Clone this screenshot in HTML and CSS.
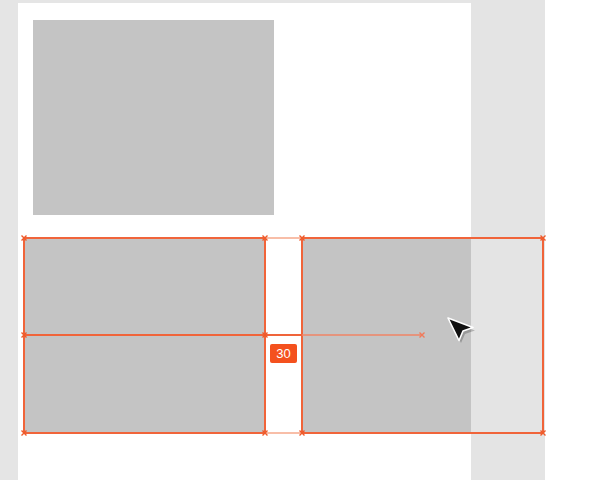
FILE: index.html
```html
<!DOCTYPE html>
<html>
<head>
<meta charset="utf-8">
<link rel="stylesheet" href="styles.css">
</head>
<body>
<div class="stage">
  <div class="gutter"></div>
  <div class="panel">
    <div class="hero"></div>
    <div class="row">
      <div class="box box-left"></div>
      <div class="box box-right"></div>
    </div>
  </div>
  <div class="strip"></div>
  <div class="rest"></div>

  <svg class="guides" width="597" height="480" viewBox="0 0 597 480">
    <g class="faint">
      <line x1="265" y1="238" x2="302" y2="238"/>
      <line x1="265" y1="433" x2="302" y2="433"/>
    </g>
    <g class="line">
      <line x1="24" y1="238" x2="265" y2="238"/>
      <line x1="302" y1="238" x2="543" y2="238"/>
      <line x1="24" y1="433" x2="265" y2="433"/>
      <line x1="302" y1="433" x2="543" y2="433"/>
      <line x1="24" y1="238" x2="24" y2="433"/>
      <line x1="265" y1="238" x2="265" y2="433"/>
      <line x1="302" y1="238" x2="302" y2="433"/>
      <line x1="543" y1="238" x2="543" y2="433"/>
      <line x1="24" y1="335" x2="302" y2="335"/>
    </g>
    <line class="arrow" x1="302" y1="335" x2="422" y2="335"/>
    <g class="marks">
      <path d="M21.5 235.5l5 5M26.5 235.5l-5 5"/>
      <path d="M262.5 235.5l5 5M267.5 235.5l-5 5"/>
      <path d="M299.5 235.5l5 5M304.5 235.5l-5 5"/>
      <path d="M540.5 235.5l5 5M545.5 235.5l-5 5"/>
      <path d="M21.5 332.5l5 5M26.5 332.5l-5 5"/>
      <path d="M262.5 332.5l5 5M267.5 332.5l-5 5"/>
      <path d="M21.5 430.5l5 5M26.5 430.5l-5 5"/>
      <path d="M262.5 430.5l5 5M267.5 430.5l-5 5"/>
      <path d="M299.5 430.5l5 5M304.5 430.5l-5 5"/>
      <path d="M540.5 430.5l5 5M545.5 430.5l-5 5"/>
      <path class="soft" d="M419.5 332.5l5 5M424.5 332.5l-5 5"/>
    </g>
    <g class="cursor">
      <path class="shadow" d="M450 321 L475 330.5 L465 334 L461 343 Z"/>
      <path class="pointer" d="M448 318 L473 327.5 L463 331 L459 340.5 Z"/>
    </g>
  </svg>

  <div class="badge">30</div>
</div>
</body>
</html>
```
FILE: styles.css
```css
html, body {
  margin: 0;
  padding: 0;
  background: #e5e5e5;
  font-family: "Liberation Sans", Arial, sans-serif;
}

.stage {
  position: relative;
  display: flex;
  width: 597px;
  height: 480px;
  overflow: hidden;
}

.gutter {
  width: 18px;
  flex-shrink: 0;
}

.panel {
  width: 453px;
  flex-shrink: 0;
  margin-top: 3px;
  background: #ffffff;
  overflow: hidden;
  padding: 17px 0 0 15px;
  box-sizing: border-box;
}

.hero {
  width: 241px;
  height: 195px;
  background: #c4c4c4;
}

.row {
  display: flex;
  gap: 37px;
  margin-top: 23px;
  margin-left: -8px;
}

.box {
  flex-shrink: 0;
  height: 195px;
  background: #c4c4c4;
}

.box-left {
  width: 240px;
}

.box-right {
  width: 241px;
}

.strip {
  width: 74px;
  flex-shrink: 0;
  background: #e4e4e4;
}

.rest {
  flex: 1;
  background: #ffffff;
}

.guides {
  position: absolute;
  left: 0;
  top: 0;
}

.line line {
  stroke: #f0643a;
  stroke-width: 2;
}

.faint line {
  stroke: #f6a98b;
  stroke-width: 1.6;
}

.arrow {
  stroke: #f08466;
  stroke-width: 1.5;
}

.marks path {
  stroke: #ef5a2a;
  stroke-width: 1.4;
  fill: none;
}

.marks .soft {
  stroke: #f07a5a;
}

.cursor .shadow {
  fill: rgba(0, 0, 0, 0.22);
}

.cursor .pointer {
  fill: #111111;
  stroke: #ffffff;
  stroke-width: 1.6;
  stroke-linejoin: round;
}

.badge {
  position: absolute;
  left: 270px;
  top: 344px;
  width: 27px;
  height: 19px;
  border-radius: 2px;
  background: #f4511e;
  color: #ffffff;
  font-size: 13px;
  line-height: 19px;
  text-align: center;
}
```
